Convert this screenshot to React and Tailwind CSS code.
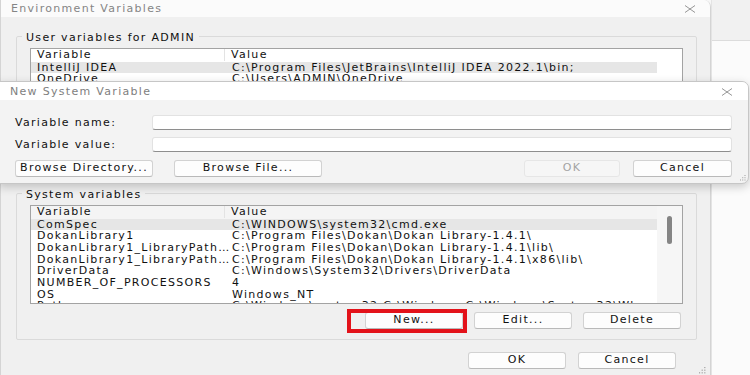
import React from "react";

const USER_VARS = [
  ["IntelliJ IDEA", "C:\\Program Files\\JetBrains\\IntelliJ IDEA 2022.1\\bin;"],
  ["OneDrive", "C:\\Users\\ADMIN\\OneDrive"],
];

const SYSTEM_VARS = [
  ["ComSpec", "C:\\WINDOWS\\system32\\cmd.exe"],
  ["DokanLibrary1", "C:\\Program Files\\Dokan\\Dokan Library-1.4.1\\"],
  ["DokanLibrary1_LibraryPath…", "C:\\Program Files\\Dokan\\Dokan Library-1.4.1\\lib\\"],
  ["DokanLibrary1_LibraryPath…", "C:\\Program Files\\Dokan\\Dokan Library-1.4.1\\x86\\lib\\"],
  ["DriverData", "C:\\Windows\\System32\\Drivers\\DriverData"],
  ["NUMBER_OF_PROCESSORS", "4"],
  ["OS", "Windows_NT"],
  ["Path", "C:\\Windows\\system32;C:\\Windows;C:\\Windows\\System32\\Wbem;"],
];

function CloseGlyph({ className }) {
  return (
    <svg viewBox="0 0 12 8" className={className} fill="none" stroke="#8a8a8a" strokeWidth="0.9">
      <path d="M1 0.5 L11 7.5 M11 0.5 L1 7.5" />
    </svg>
  );
}

function Grip({ className }) {
  return (
    <svg viewBox="0 0 8 8" className={className} fill="#9a9a9a">
      <rect x="6" y="0" width="1.3" height="1.3" />
      <rect x="3" y="3" width="1.3" height="1.3" />
      <rect x="6" y="3" width="1.3" height="1.3" />
      <rect x="0" y="6" width="1.3" height="1.3" />
      <rect x="3" y="6" width="1.3" height="1.3" />
      <rect x="6" y="6" width="1.3" height="1.3" />
    </svg>
  );
}

function Button({ children, className = "", disabled }) {
  return (
    <div
      className={`flex h-[17px] items-center justify-center rounded-[3px] border ${
        disabled
          ? "border-[#e6e6e6] bg-[#f6f6f6] text-[#a3a3a3]"
          : "border-[#d2d2d2] border-b-[#b9b9b9] bg-[#fdfdfd]"
      } ${className}`}
    >
      {children}
    </div>
  );
}

function GroupLegend({ children }) {
  return <legend className="-ml-[8px] px-[4px] pt-[4px] leading-[14px]">{children}</legend>;
}

function VarList({ rows, headerBg, scroll, height }) {
  return (
    <div className={`flex overflow-hidden border border-[#a3a3a3] bg-white ${height}`}>
      <div className="flex w-[626px] flex-col">
        <div className={`flex h-[12.5px] shrink-0 items-center ${headerBg}`}>
          <div className="w-[194px] border-r border-[#e3e3e3] pl-[6px] leading-[12px]">Variable</div>
          <div className="pl-[6px] leading-[12px]">Value</div>
        </div>
        {rows.map(([name, value], i) => (
          <div
            key={i}
            className={`flex h-[11.67px] shrink-0 items-center whitespace-nowrap ${i === 0 ? "bg-[#e6e6e6]" : ""}`}
          >
            <div className="w-[195px] shrink-0 pl-[6px] leading-[11px]">{name}</div>
            <div className="pl-[6px] leading-[11px]">{value}</div>
          </div>
        ))}
      </div>
      <div className={`flex-1 ${scroll ? "bg-[#f6f6f6]" : ""}`}>
        {scroll && <div className="ml-[10px] mt-[10px] h-[28px] w-[5px] rounded-[3px] bg-[#858585]" />}
      </div>
    </div>
  );
}

export default function App() {
  return (
    <div className="relative h-[375px] w-[750px] overflow-hidden bg-[#f7f7f7] font-['DejaVu_Sans',sans-serif] text-[11px] tracking-[1.3px] text-[#111]">
      <div className="flex h-full">
        {/* Environment Variables window */}
        <div className="relative flex h-[377px] w-[711px] shrink-0 flex-col overflow-hidden rounded-tr-[7px] border-x border-[#d4d4d4] bg-[#f0f0f0]">
          <div className="flex h-[17px] shrink-0 items-center justify-between bg-[#fbfbfb] pl-[10px] pr-[14px]">
            <span className="leading-[13px] text-[#858585]">Environment Variables</span>
            <CloseGlyph className="h-[8px] w-[12px]" />
          </div>
          <div className="flex flex-col pl-[15px] pr-[13px]">
            <fieldset className="mt-[10px] h-[151px] rounded-[2px] border border-[#dadada] px-[13px] pt-[3px]">
              <GroupLegend>User variables for ADMIN</GroupLegend>
              <VarList rows={USER_VARS} headerBg="bg-white" height="h-[110px]" />
            </fieldset>
            <fieldset className="mt-[6px] rounded-[2px] border border-[#dadada] px-[13px] pb-[10px] pt-[3px]">
              <GroupLegend>System variables</GroupLegend>
              <VarList rows={SYSTEM_VARS} headerBg="bg-[#f4f4f4]" scroll height="h-[99px]" />
              <div className="mt-[8px] flex justify-end gap-[11px] pr-[2px]">
                <div className="relative">
                  <Button className="w-[98px]">New...</Button>
                  <div className="absolute -bottom-[4px] -left-[18px] -right-[4px] -top-[3px] border-[4px] border-[#e3121a]" />
                </div>
                <Button className="w-[98px]">Edit...</Button>
                <Button className="w-[98px]">Delete</Button>
              </div>
            </fieldset>
            <div className="mt-[12px] flex justify-end gap-[12px] pr-[21px]">
              <Button className="h-[16px] w-[98px]">OK</Button>
              <Button className="h-[16px] w-[98px]">Cancel</Button>
            </div>
          </div>
          <Grip className="absolute bottom-[3px] right-[4px] h-[7px] w-[7px]" />
        </div>

        {/* window behind, right edge */}
        <div className="flex flex-1 flex-col border-l border-[#e4e4e4]">
          <div className="h-[41px] border-b border-[#dcdcdc] bg-[#f1f1f1]" />
          <div className="flex-1 bg-[#fbfbfb]" />
        </div>
      </div>

      {/* New System Variable dialog */}
      <div className="absolute left-[-2px] top-[81px] flex h-[103px] w-[751px] flex-col overflow-hidden rounded-r-[7px] border border-[#c6c6c6] bg-[#f3f3f3] shadow-[0_3px_10px_rgba(0,0,0,0.2)]">
        <div className="flex h-[18px] shrink-0 items-center justify-between bg-white pl-[11px] pr-[15px] pt-[1px]">
          <span className="leading-[13px] text-[#7e7e7e]">New System Variable</span>
          <CloseGlyph className="h-[8px] w-[12px]" />
        </div>
        <div className="relative flex flex-1 flex-col pl-[16px] pr-[16px] pt-[15px]">
          <div className="flex items-center">
            <span className="w-[137px] shrink-0 leading-[13px]">Variable name:</span>
            <div className="h-[15px] flex-1 rounded-[3px] border border-[#e2e2e2] border-b-[#8e8e8e] bg-white" />
          </div>
          <div className="mt-[7px] flex items-center">
            <span className="w-[137px] shrink-0 leading-[13px]">Variable value:</span>
            <div className="h-[15px] flex-1 rounded-[3px] border border-[#e2e2e2] border-b-[#8e8e8e] bg-white" />
          </div>
          <div className="mt-[8px] flex items-center">
            <Button className="w-[138px]">Browse Directory...</Button>
            <Button className="ml-[21px] w-[148px]">Browse File...</Button>
            <Button disabled className="ml-auto w-[96px]">OK</Button>
            <Button className="ml-[13px] w-[99px]">Cancel</Button>
          </div>
          <Grip className="absolute bottom-[2px] right-[2px] h-[6px] w-[6px]" />
        </div>
      </div>
    </div>
  );
}
